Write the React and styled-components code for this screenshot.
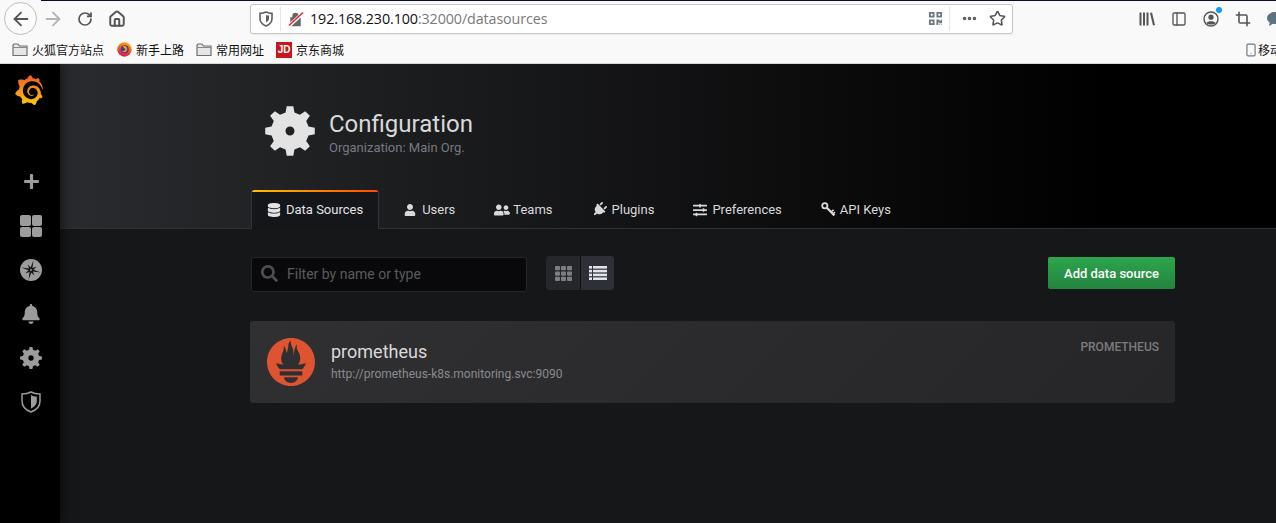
import React from "react";
import styled, { createGlobalStyle } from "styled-components";
import {
  ArrowLeft,
  ArrowRight,
  Crop,
  Ellipsis,
  House,
  PanelLeft,
  RotateCw,
  Smartphone,
  Star,
} from "lucide-react";
import {
  FaBell,
  FaDatabase,
  FaPlug,
  FaPlus,
  FaQrcode,
  FaSearch,
  FaSlidersH,
  FaTh,
  FaUser,
  FaUserFriends,
} from "react-icons/fa";
import { SiGrafana, SiPrometheus } from "react-icons/si";

const GlobalStyle = createGlobalStyle`
  html, body {
    margin: 0;
    height: 523px;
    overflow: hidden;
    background: #161719;
  }
  * { box-sizing: border-box; }
`;

const cjk = `"Noto Sans CJK SC", "Noto Sans", sans-serif`;

const Window = styled.div`
  display: flex;
  flex-direction: column;
  width: 1276px;
  height: 523px;
  overflow: hidden;
`;

/* browser chrome */
const Chrome = styled.div`
  flex: none;
  height: 64px;
  background: #f9f9fa;
  border-bottom: 1px solid #d8d8d8;
  overflow: hidden;
`;

const TopEdge = styled.div`
  height: 1px;
  margin-left: 41px;
  background: #0b0b2a;
`;

const Toolbar = styled.div`
  display: flex;
  align-items: center;
  height: 35px;
  padding-left: 4px;
  color: #555;
`;

const BackButton = styled.div`
  flex: none;
  display: flex;
  align-items: center;
  justify-content: center;
  width: 33px;
  height: 33px;
  border: 1px solid #bdbdbd;
  border-radius: 50%;
  background: #fbfbfb;
`;

const NavIcon = styled.div`
  flex: none;
  display: flex;
  align-items: center;
  justify-content: center;
  width: ${(p) => p.$w}px;
  color: ${(p) => p.$color || "#555"};
`;

const UrlBar = styled.div`
  flex: none;
  display: flex;
  align-items: center;
  width: 763px;
  height: 30px;
  margin-left: 117px;
  padding: 0 6px 0 8px;
  background: #fff;
  border: 1px solid #c6c6c6;
  border-radius: 3px;
  box-shadow: 0 1px 2px rgba(0, 0, 0, 0.06);
`;

const Divider = styled.div`
  flex: none;
  width: 1px;
  height: 24px;
  margin: ${(p) => p.$margin};
  background: #e4e4e4;
`;

const Url = styled.div`
  flex: 1;
  margin-left: 6px;
  font: 14.3px "Open Sans", "Noto Sans", sans-serif;
  color: #7a7a7a;
  letter-spacing: -0.1px;
  white-space: nowrap;
`;

const Host = styled.span`
  color: #111;
`;

const UrlStar = styled(Star)`
  margin-left: 11px;
`;

const ToolIcons = styled.div`
  flex: none;
  display: flex;
  align-items: center;
  gap: 16px;
  margin-left: 126px;
  color: #555;
`;

const ProfileWrap = styled.div`
  position: relative;
  display: flex;
  width: 16px;
  height: 16px;
`;

const Dot = styled.span`
  position: absolute;
  top: -4px;
  right: -3px;
  width: 6px;
  height: 6px;
  border-radius: 50%;
  background: #0a9dff;
`;

const Bookmarks = styled.div`
  display: flex;
  align-items: center;
  height: 27px;
  padding-left: 12px;
  white-space: nowrap;
`;

const Bookmark = styled.div`
  flex: none;
  display: flex;
  align-items: center;
  gap: 4px;
  margin-right: 12px;
  font: 12px ${cjk};
  color: #111;

  &:first-child {
    margin-right: 13px;
  }
`;

const MobileMark = styled(Bookmark)`
  margin-left: 888px;
  margin-right: 0;
  gap: 0;
`;

const JdBadge = styled.span`
  display: flex;
  align-items: center;
  justify-content: center;
  width: 16px;
  height: 16px;
  background: #c8161d;
  color: #fff;
  font: 700 10px "Liberation Sans", sans-serif;
`;

/* grafana */
const Grafana = styled.div`
  flex: 1;
  display: flex;
  min-height: 0;
  overflow: hidden;
`;

const SideMenu = styled.nav`
  position: relative;
  z-index: 1;
  flex: none;
  display: flex;
  flex-direction: column;
  align-items: center;
  width: 60px;
  padding-left: 2px;
  background: #000;
  color: #9c9c9c;
  box-shadow: 2px 0 12px rgba(0, 0, 0, 0.55);
`;

const LogoSlot = styled.div`
  display: flex;
  align-items: flex-start;
  justify-content: center;
  height: 94px;
  margin-left: -4px;
  padding-top: 11px;
`;

const SideItem = styled.div`
  display: flex;
  align-items: center;
  justify-content: center;
  height: ${(p) => p.$h || 44}px;
  width: 100%;
`;

const DashGrid = styled.div`
  display: grid;
  grid-template-columns: 10.5px 10.5px;
  gap: 1px;
`;

const DashCell = styled.span`
  height: 10.5px;
  border-radius: 2px;
  background: #9c9c9c;
`;

const Main = styled.main`
  flex: 1;
  min-width: 0;
  background: #161719;
`;

const PageHeader = styled.header`
  height: 165px;
  padding: 42px 0 0 190px;
  background: linear-gradient(90deg, #2a2b2e, #000 86%);
  border-bottom: 1px solid #2f3033;
`;

const HeaderInfo = styled.div`
  display: flex;
  align-items: center;
  gap: 14px;
  height: 50px;
  padding-left: 15px;
`;

const HeaderText = styled.div`
  padding-top: 1px;
`;

const Title = styled.h1`
  margin: 0;
  font: 400 24px/30px Roboto, sans-serif;
  color: #d8d9da;
`;

const SubTitle = styled.div`
  margin-top: 1px;
  font: 400 13px/15px Roboto, sans-serif;
  color: #767980;
`;

const Tabs = styled.div`
  display: flex;
  gap: 9px;
  height: 39px;
  margin-top: 34px;
  padding-left: 1px;
`;

const Tab = styled.div`
  display: flex;
  align-items: center;
  gap: 6px;
  height: 39px;
  padding: 0 15px;
  font: 400 13px Roboto, sans-serif;
  color: ${(p) => (p.$active ? "#e3e3e3" : "#d8d9da")};
  background-color: ${(p) => (p.$active ? "#141619" : "transparent")};
  border-style: solid;
  border-width: ${(p) => (p.$active ? "0 1px" : "0")};
  border-color: #333437;
  border-radius: 3px 3px 0 0;
  ${(p) =>
    p.$active &&
    `background-image: linear-gradient(90deg, #ffc000, #ff4a00);
     background-size: 100% 2px;
     background-repeat: no-repeat;
     margin-right: 1px;`}
`;

const TabIcon = styled.span`
  flex: none;
  display: flex;
  align-items: center;
  width: ${(p) => p.$w}px;
  height: 16px;
`;

const PlugIcon = styled(FaPlug)`
  flex: none;
  transform: rotate(45deg);
`;

const PageBody = styled.div`
  width: 925px;
  margin-left: 190px;
`;

const ActionBar = styled.div`
  display: flex;
  align-items: flex-start;
  padding-top: 28px;
`;

const FilterBox = styled.div`
  display: flex;
  align-items: center;
  gap: 9px;
  width: 276px;
  height: 35px;
  margin-left: 1px;
  padding: 0 0 2px 9px;
  background: #09090b;
  border: 1px solid #262628;
  border-radius: 3px;
  color: #4d4e51;
`;

const FilterText = styled.span`
  font: 400 14px Roboto, sans-serif;
  color: #5a5b5e;
`;

const Toggle = styled.div`
  display: flex;
  margin-left: 19px;
  margin-top: -1px;
  height: 34px;
`;

const ToggleButton = styled.div`
  display: flex;
  align-items: center;
  justify-content: center;
  width: 34px;
  background: ${(p) => (p.$active ? "#2f3036" : "#26272b")};
  color: ${(p) => (p.$active ? "#dfe3ea" : "#7d7d84")};
  border-left: ${(p) => (p.$active ? "1px solid #111" : "0")};
  border-radius: ${(p) => (p.$active ? "0 3px 3px 0" : "3px 0 0 3px")};
`;

const AddButton = styled.div`
  display: flex;
  align-items: center;
  justify-content: center;
  width: 127px;
  height: 32px;
  margin-left: auto;
  background: linear-gradient(180deg, #2ca64d, #23843e);
  border-radius: 2px;
  font: 500 13px Roboto, sans-serif;
  color: #fff;
`;

const Card = styled.div`
  display: flex;
  align-items: center;
  height: 82px;
  margin-top: 29px;
  padding: 0 16px 0 17px;
  background: linear-gradient(135deg, #303033, #262628);
  border-radius: 3px;
`;

const CardText = styled.div`
  margin-left: 16px;
  margin-top: -2px;
`;

const CardName = styled.div`
  font: 400 18px/22px Roboto, sans-serif;
  color: #d8d9da;
`;

const CardUrl = styled.div`
  margin-top: 3px;
  font: 400 12px/16px Roboto, sans-serif;
  color: #8a8a8d;
`;

const CardType = styled.div`
  align-self: flex-start;
  margin-left: auto;
  padding-top: 18px;
  font: 500 12px/16px Roboto, sans-serif;
  color: #7b7b7e;
`;

/* builds a cog outline with a round hole in the middle */
function gearPath(teeth, outer, root, hole) {
  const step = (Math.PI * 2) / teeth;
  const pts = [];
  for (let i = 0; i < teeth; i++) {
    const a = i * step - Math.PI / 2;
    const w = step * 0.17;
    const b = step * 0.3;
    pts.push([a - b, root], [a - w, outer], [a + w, outer], [a + b, root]);
  }
  const line = pts
    .map(([a, r]) => `${(r * Math.cos(a)).toFixed(2)} ${(r * Math.sin(a)).toFixed(2)}`)
    .join("L");
  return `M${line}Z M${hole} 0A${hole} ${hole} 0 1 0 ${-hole} 0A${hole} ${hole} 0 1 0 ${hole} 0Z`;
}

/* eight point compass rose, long spikes on the main directions */
function rosePath() {
  const radii = [10, 2.4, 6.5, 2.4];
  const pts = [];
  for (let i = 0; i < 16; i++) {
    const a = (i * Math.PI) / 8 + 0.25;
    const r = radii[i % 4];
    pts.push(`${(11 + r * Math.cos(a)).toFixed(2)} ${(11 + r * Math.sin(a)).toFixed(2)}`);
  }
  return `M${pts.join("L")}Z`;
}

const Gear = ({ size, color, hole }) => (
  <svg width={size} height={size} viewBox="-25 -25 50 50">
    <path d={gearPath(8, 25, 19, hole)} fill={color} fillRule="evenodd" />
  </svg>
);

const FolderIcon = () => (
  <svg width="16" height="14" viewBox="0 0 16 14">
    <path
      d="M1 3V12.5H15V3H7.5L6 1H2L1 2Z"
      fill="#e6e6e6"
      stroke="#6e6e6e"
      strokeWidth="1.2"
    />
    <path d="M1 4.5H15" stroke="#8a8a8a" />
  </svg>
);

const FirefoxIcon = () => (
  <svg width="15" height="15" viewBox="0 0 15 15">
    <defs>
      <linearGradient id="ffx" x1="0.7" y1="0" x2="0.3" y2="1">
        <stop offset="0" stopColor="#ffb000" />
        <stop offset="0.6" stopColor="#f4461f" />
        <stop offset="1" stopColor="#d4145a" />
      </linearGradient>
    </defs>
    <circle cx="7.5" cy="7.5" r="7.2" fill="url(#ffx)" />
    <circle cx="7.8" cy="7.3" r="4" fill="#3b3ba8" />
    <path d="M6 4.2C9 3.6 11 6 10 8.4 9 10.8 5.6 10.8 5 8.6 6.5 9.4 8.6 8.6 8.4 7 7.6 6.4 6.4 6 6 4.2Z" fill="#ff9a1e" />
  </svg>
);

const ShieldIcon = () => (
  <svg width="14" height="16" viewBox="0 0 14 16">
    <path
      d="M7 1C5 2 3 2.4 1 2.4V7.5C1 11 3.5 13.6 7 15 10.5 13.6 13 11 13 7.5V2.4C11 2.4 9 2 7 1Z"
      fill="none"
      stroke="#5f5f5f"
      strokeWidth="1.6"
    />
    <path d="M7 4V11.5C8.8 10.6 10 9.4 10 7.5V4.6C9 4.6 8 4.4 7 4Z" fill="#5f5f5f" />
  </svg>
);

const LockIcon = () => (
  <svg width="16" height="16" viewBox="0 0 16 16">
    <path d="M3 7H12V14.5H3ZM5 7V5A2.5 2.5 0 0 1 10 5V7" fill="#666" stroke="#666" strokeWidth="1.4" />
    <path d="M1 15L15 2" stroke="#fff" strokeWidth="3.5" />
    <path d="M1 14.5L15 1.5" stroke="#e2263a" strokeWidth="1.6" />
  </svg>
);

const LibraryIcon = () => (
  <svg width="16" height="16" viewBox="0 0 16 16" fill="#555">
    <rect x="0.5" y="1.5" width="2" height="13" />
    <rect x="4" y="1.5" width="2" height="13" />
    <rect x="7.5" y="1.5" width="2" height="13" />
    <path d="M11 2L13 1.4 16 14 14 14.6Z" />
  </svg>
);

const ProfileIcon = () => (
  <svg width="16" height="16" viewBox="0 0 16 16" fill="none" stroke="#555">
    <circle cx="8" cy="8" r="7" strokeWidth="1.4" />
    <circle cx="8" cy="6.2" r="2.6" fill="#555" stroke="none" />
    <path d="M3.4 12C4.5 9.8 11.5 9.8 12.6 12 11 14 5 14 3.4 12Z" fill="#555" stroke="none" />
  </svg>
);

const ChatIcon = () => (
  <svg width="16" height="16" viewBox="0 0 16 16" fill="#5d7480">
    <path d="M8 1C3.5 1 0 3.7 0 7c0 1.8 1 3.4 2.7 4.5L2 15l4-2.2c.6.1 1.3.2 2 .2 4.5 0 8-2.7 8-6s-3.5-6-8-6Z" />
  </svg>
);

const CompassIcon = () => (
  <svg width="22" height="22" viewBox="0 0 22 22">
    <circle cx="11" cy="11" r="11" fill="#9c9c9c" />
    <path d={rosePath()} fill="#111" />
    <circle cx="11" cy="11" r="1.2" fill="#777" />
  </svg>
);

const SideShield = () => (
  <svg width="20" height="22" viewBox="0 0 20 22">
    <path
      d="M10 1C7 2.6 4 3 1 3V10C1 15 4.5 19 10 21 15.5 19 19 15 19 10V3C16 3 13 2.6 10 1Z"
      fill="none"
      stroke="#9c9c9c"
      strokeWidth="1.5"
    />
    <path d="M10 4V17.5C13 16 15.8 13.5 15.8 10V5.6C13.6 5.5 11.6 5 10 4Z" fill="#9c9c9c" />
  </svg>
);

const KeyIcon = () => (
  <svg width="15" height="15" viewBox="0 0 15 15" fill="none" stroke="#d8d9da" style={{ flex: "none" }}>
    <circle cx="3.8" cy="3.8" r="2.6" strokeWidth="1.8" />
    <path d="M5.8 5.8L13.4 13.4" strokeWidth="2.2" />
    <path d="M10 10L12.6 7.8M12 12L14 10.2" strokeWidth="1.6" />
  </svg>
);

const ListIcon = () => (
  <svg width="18" height="14" viewBox="0 0 18 14" fill="currentColor">
    <rect y="0" width="18" height="2.6" />
    <rect y="3.8" width="18" height="2.6" />
    <rect y="7.6" width="18" height="2.6" />
    <rect y="11.4" width="18" height="2.6" />
    <rect x="3" y="0" width="1" height="14" fill="#2f3036" />
  </svg>
);

const GrafanaLogo = () => (
  <>
    <svg width="0" height="0" style={{ position: "absolute" }}>
      <defs>
        <linearGradient id="grafanaFlame" x1="0" y1="0" x2="0" y2="1">
          <stop offset="0" stopColor="#f05a28" />
          <stop offset="1" stopColor="#fbca0a" />
        </linearGradient>
      </defs>
    </svg>
    <SiGrafana size={30} style={{ fill: "url(#grafanaFlame)" }} />
  </>
);

const tabs = [
  { label: "Data Sources", w: 13, icon: <FaDatabase size={14} style={{ flex: "none" }} />, active: true },
  { label: "Users", w: 12, icon: <FaUser size={12} /> },
  { label: "Teams", w: 13, icon: <FaUserFriends size={16} style={{ flex: "none" }} /> },
  { label: "Plugins", w: 14, icon: <PlugIcon size={15} /> },
  { label: "Preferences", w: 13, icon: <FaSlidersH size={14} style={{ flex: "none" }} /> },
  { label: "API Keys", w: 13, icon: <KeyIcon /> },
];

const links = [
  { label: "火狐官方站点", icon: <FolderIcon /> },
  { label: "新手上路", icon: <FirefoxIcon /> },
  { label: "常用网址", icon: <FolderIcon /> },
  { label: "京东商城", icon: <JdBadge>JD</JdBadge> },
];

export default function App() {
  return (
    <Window>
      <GlobalStyle />
      <Chrome>
        <TopEdge />
        <Toolbar>
          <BackButton>
            <ArrowLeft size={22} color="#555" strokeWidth={2} />
          </BackButton>
          <NavIcon $w={32} $color="#b4b4b4">
            <ArrowRight size={22} strokeWidth={2} />
          </NavIcon>
          <NavIcon $w={32}>
            <RotateCw size={16} strokeWidth={2.6} />
          </NavIcon>
          <NavIcon $w={32}>
            <House size={18} strokeWidth={2.6} />
          </NavIcon>
          <UrlBar>
            <ShieldIcon />
            <Divider $margin="0 7px 0 7px" />
            <LockIcon />
            <Url>
              <Host>192.168.230.100</Host>:32000/datasources
            </Url>
            <FaQrcode size={15} color="#6a7a86" />
            <Divider $margin="0 11px 0 6px" />
            <Ellipsis size={17} color="#555" strokeWidth={3} />
            <UrlStar size={17} color="#555" strokeWidth={2.2} />
          </UrlBar>
          <ToolIcons>
            <LibraryIcon />
            <PanelLeft size={16} strokeWidth={2} />
            <ProfileWrap>
              <ProfileIcon />
              <Dot />
            </ProfileWrap>
            <Crop size={16} strokeWidth={2.4} />
            <ChatIcon />
          </ToolIcons>
        </Toolbar>
        <Bookmarks>
          {links.map((link) => (
            <Bookmark key={link.label}>
              {link.icon}
              {link.label}
            </Bookmark>
          ))}
          <MobileMark>
            <Smartphone size={14} color="#6a7a86" strokeWidth={2} />
            移动设备上的书签
          </MobileMark>
        </Bookmarks>
      </Chrome>
      <Grafana>
        <SideMenu>
          <LogoSlot>
            <GrafanaLogo />
          </LogoSlot>
          <SideItem $h={46}>
            <FaPlus size={17} />
          </SideItem>
          <SideItem>
            <DashGrid>
              <DashCell />
              <DashCell />
              <DashCell />
              <DashCell />
            </DashGrid>
          </SideItem>
          <SideItem>
            <CompassIcon />
          </SideItem>
          <SideItem>
            <FaBell size={20} />
          </SideItem>
          <SideItem>
            <Gear size={22} color="#9c9c9c" hole={6} />
          </SideItem>
          <SideItem>
            <SideShield />
          </SideItem>
        </SideMenu>
        <Main>
          <PageHeader>
            <HeaderInfo>
              <Gear size={50} color="#e3e3e3" hole={4.5} />
              <HeaderText>
                <Title>Configuration</Title>
                <SubTitle>Organization: Main Org.</SubTitle>
              </HeaderText>
            </HeaderInfo>
            <Tabs>
              {tabs.map((tab) => (
                <Tab key={tab.label} $active={tab.active}>
                  <TabIcon $w={tab.w}>{tab.icon}</TabIcon>
                  {tab.label}
                </Tab>
              ))}
            </Tabs>
          </PageHeader>
          <PageBody>
            <ActionBar>
              <FilterBox>
                <FaSearch size={17} />
                <FilterText>Filter by name or type</FilterText>
              </FilterBox>
              <Toggle>
                <ToggleButton>
                  <FaTh size={17} />
                </ToggleButton>
                <ToggleButton $active>
                  <ListIcon />
                </ToggleButton>
              </Toggle>
              <AddButton>Add data source</AddButton>
            </ActionBar>
            <Card>
              <SiPrometheus size={48} color="#de5330" />
              <CardText>
                <CardName>prometheus</CardName>
                <CardUrl>http://prometheus-k8s.monitoring.svc:9090</CardUrl>
              </CardText>
              <CardType>PROMETHEUS</CardType>
            </Card>
          </PageBody>
        </Main>
      </Grafana>
    </Window>
  );
}
